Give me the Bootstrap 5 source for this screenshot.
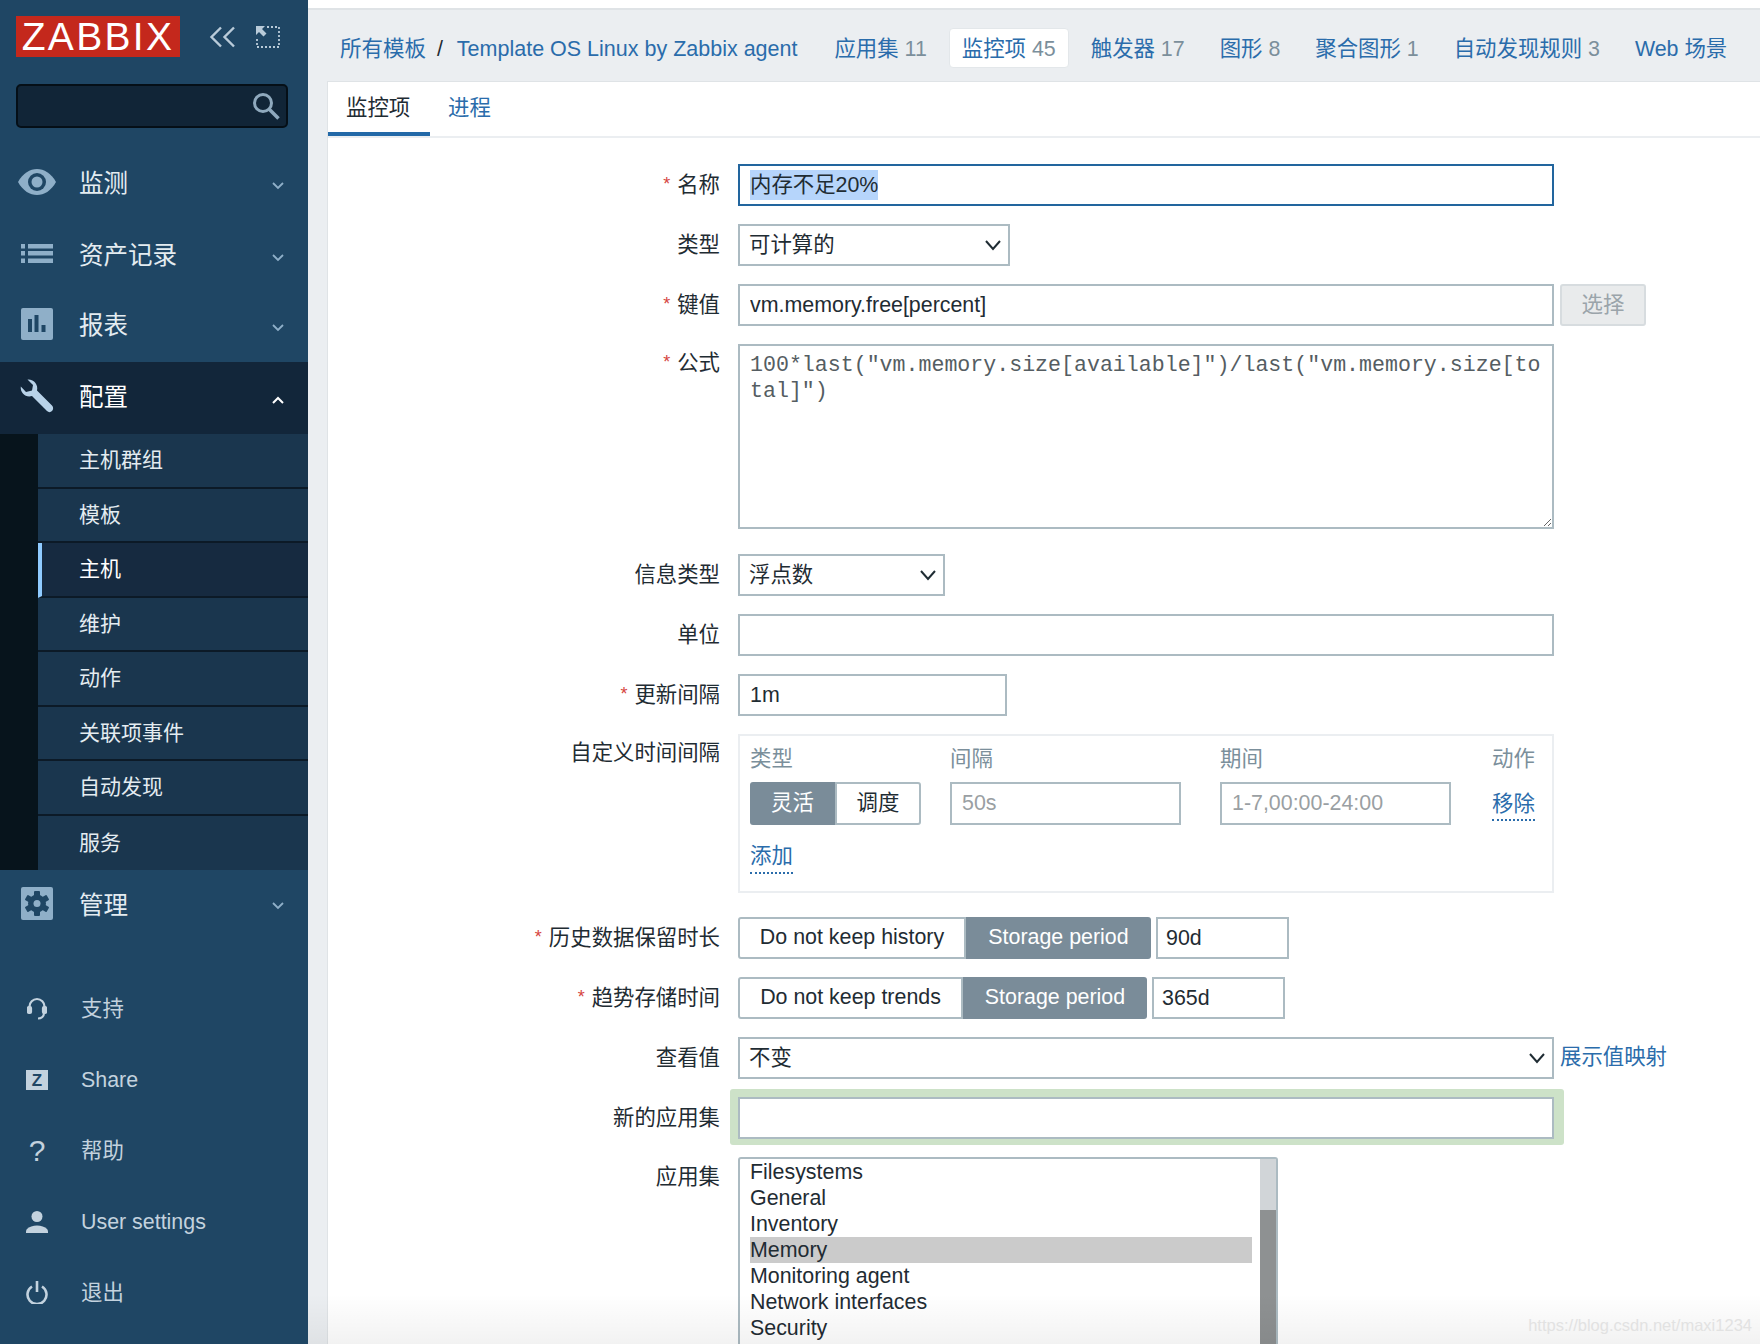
<!DOCTYPE html>
<html lang="zh">
<head>
<meta charset="utf-8">
<title>Zabbix 监控项</title>
<link href="https://cdn.jsdelivr.net/npm/bootstrap@5.3.0/dist/css/bootstrap.min.css" rel="stylesheet">
<style>
html,body{height:1344px;overflow:hidden}
body{font-family:"Liberation Sans","Noto Sans CJK SC",sans-serif;font-size:21.4px;color:#1f2c33;background:#fff;line-height:1.2}
a{text-decoration:none;color:#2a6cab}
.page{height:1344px;position:relative}
.zside{width:308px;flex:none;background:#1f4664;height:1344px;overflow:hidden}
.zlogo{width:164px;height:41px;background:#c4281c;color:#fff;font-size:39px;letter-spacing:2.3px;line-height:41px;text-align:center}
.ztop{padding:16px 0 0 16px;height:84px;gap:29px}
.ztools{height:41px;gap:20px}
.zsearch{margin:0 20px 20px 16px;height:44px;background:#112537;border:2px solid #050f17;border-radius:5px;padding-right:6px}
.zitem{height:72px;color:#e4ecf1;font-size:24.5px;padding-right:24px}
.zitem.zopen{background:#12263a;color:#fff}
.zitem.zshort{height:70px;padding-bottom:2px}
.zic{width:74px;flex:none;display:flex;justify-content:center;margin-bottom:5px}
.zlab{margin-left:5px}
.zarrow{margin-top:3px}
.zsub{padding-left:38px;background:#07141c}
.zsub a{display:flex;align-items:center;height:54.5px;padding:0 0 1px 41px;background:#1a364e;color:#e4ecf1;font-size:21px;border-bottom:2px solid #0c1a27}
.zsub a:last-child{border-bottom:0}
.zsub a.zcur{background:#162a40;border-left:4px solid #8fcbff;padding-left:37px;color:#fff}
.zbot{margin-top:32px}
.zbot .zitem{height:71px;color:#c3d2de;font-size:21.4px;padding:0}
.zbot .zic{margin-bottom:2px}
.zbot .zlab{margin-left:7px}
.zglyph{font-size:30px;line-height:1;color:#c3d2de}
.zmain{flex:1 1 auto;min-width:0;background:#ebeef1;border-top:2px solid #dfe3e6;margin-top:8px;height:1336px;overflow:hidden}
.zhead{height:71px;flex:none;padding:5px 0 0 19px;font-size:21.4px}
.zhead .zh{padding:8px 12px 4px;margin-right:9px;border:1px solid transparent;border-radius:4px;white-space:nowrap}
.zhead .zh.zon{background:#fff;border-color:#e3e7ea}
.zhead .zc{color:#7b8f9b}
.zhead .zcrumb{margin-right:0;padding-right:0;font-size:21.5px}
.zhead .zcrumb.zlast{padding-left:0;margin-right:23px}
.zsl{color:#1f2c33;margin:3px 7px 0 4px}
.zpanel{margin-left:19px;background:#fff;border-top:1px solid #dfe3e6;border-left:1px solid #dfe3e6;flex:1 1 auto;min-height:0;overflow:hidden}
.ztabs{height:56px;border-bottom:2px solid #ebeef1}
.ztabs a{height:54px;padding:3px 18px 0;display:flex;align-items:center;border-bottom:4px solid transparent}
.ztabs a.zon{color:#1f2c33;border-bottom-color:#2369a8;width:102px}
.zform{padding-top:26px}
.zrow{display:flex;margin-bottom:18px}
.zrow.zgap{margin-bottom:25px}
.zrow.zgap2{margin-bottom:24px}
.zlbl{width:392px;flex:none;text-align:right;margin-right:18px;height:42px;line-height:42px;white-space:nowrap}
.zlbl.ztall{height:auto;line-height:26px;padding-top:6px}
.zlbl.zt7{padding-top:7px}
.zstar{color:#d64541;font-size:18px;margin-right:7px;position:relative;top:-2px}
.zw{width:816px;flex:none}
.zctl.form-control,.zctl.form-select{height:42px;border:2px solid #acbbc2;border-radius:0;padding:0 10px;font-size:21.4px;color:#1f2c33;line-height:38px;box-shadow:none}
.zctl.form-select{padding-left:9px;padding-right:34px;background-size:18px 12px;background-position:right 6px center;background-image:url("data:image/svg+xml,%3csvg xmlns='http://www.w3.org/2000/svg' viewBox='0 0 18 12'%3e%3cpath fill='none' stroke='%231f2c33' stroke-width='2' d='M2 2l7 8 7-8'/%3e%3c/svg%3e")}
.zctl::placeholder{color:#9a9fa3}
.zfocus.form-control{border-color:#22659e;display:flex;align-items:center}
.zsel{background:#b6d5fb;line-height:30px;height:30px}
.zpick.btn{width:86px;height:42px;margin-left:6px;background:#e9ebec;border:2px solid #d7dcdf;border-radius:3px;color:#9aa4aa;font-size:21.4px;padding:0}
.zta.form-control{height:185px;font-family:"Liberation Mono",monospace;font-size:21.6px;line-height:25.5px;padding:7px 10px 6px;border:2px solid #acbbc2;border-radius:0;color:#555d62;resize:vertical;box-shadow:none}
.zbox{width:816px;height:159px;border:2px solid #ebeef1;padding:10px 10px 0;font-size:21.4px}
.zbox .zth{color:#7b8f9b;line-height:26px;height:26px;margin-bottom:10px;display:flex}
.zc1{width:200px;flex:none}.zc2{width:270px;flex:none}.zc3{width:272px;flex:none}
.zbtns{display:inline-flex;height:42px}
.zbtns.zsm{height:43px}
.zbtns .btn{border:2px solid #acbbc2;background:#fff;color:#1f2c33;font-size:21.4px;padding:0;line-height:1;border-radius:3px 0 0 3px}
.zbtns .btn.zon{border:0;background:#7a8c99;color:#fff;border-radius:0 3px 3px 0}
.zbtns .btn.zfirst{border-radius:3px 0 0 3px}
.zbtns .btn.zlastb{border-radius:0 3px 3px 0}
.zbox .zctl.form-control{width:231px;height:43px}
.zdot{border-bottom:2px dotted #2a6cab;padding-bottom:2px;display:inline-block}
.zdrop{margin-top:6px}
.zadd{margin-top:19px}
.znum.form-control{width:133px;margin-left:5px;padding-left:8px}
.zmapl{margin-left:6px}
.znew{background:#cde2c8;border-radius:3px;padding:8px 10px 6px 8px;margin:-8px -10px -6px -8px}
.zlist{width:540px;height:300px;border:2px solid #acbbc2;border-radius:3px 3px 0 0;display:flex;padding-left:10px;line-height:26px}
.zopts{width:502px;flex:none;margin-right:8px}
.zopts div{height:26px;white-space:nowrap}
.zopts .zpicked{background:#cbcbcb}
.zsb{width:16px;flex:none;background:#8e9192}
.zsbt{height:51px;background:#d1d5d8}
.zfade{position:absolute;left:308px;right:0;bottom:0;height:50px;background:linear-gradient(rgba(0,0,0,0),rgba(0,0,0,.05));pointer-events:none}
.zmark{position:absolute;right:8px;bottom:9px;font-size:16.5px;color:#e2e2e2;line-height:20px;white-space:nowrap}
</style>
</head>
<body>
<div class="page d-flex">
  <aside class="zside d-flex flex-column">
    <div class="ztop d-flex align-items-start">
      <div class="zlogo">ZABBIX</div>
      <div class="ztools d-flex align-items-center">
        <svg width="27" height="22" viewBox="0 0 27 22" fill="none" stroke="#b9cbd9" stroke-width="2.4"><path d="M12 1.500 2.500 11l9.500 9.500M25 1.500 15.500 11l9.500 9.500"/></svg>
        <svg width="24" height="22" viewBox="0 0 24 22" fill="none"><path d="M11 1h12v20H1V11" stroke="#b9cbd9" stroke-width="1.800" stroke-dasharray="2 2"/><path d="M0 0h9L6 3l4.500 4.500-3 3L3 6l-3 3z" fill="#b9cbd9"/></svg>
      </div>
    </div>
    <div class="zsearch d-flex align-items-center justify-content-end">
      <svg width="28" height="28" viewBox="0 0 28 28" fill="none" stroke="#8fa9bd"><circle cx="11" cy="11" r="8.500" stroke-width="3"/><path d="M17 17l9.500 9.500" stroke-width="3.500"/></svg>
    </div>
    <nav class="d-flex flex-column">
      <a class="zitem d-flex align-items-center" href="#"><span class="zic"><svg width="38" height="26" viewBox="0 0 38 26"><path d="M0 13C5 4 12 0 19 0s14 4 19 13c-5 9-12 13-19 13S5 22 0 13z" fill="#8fafc8"/><circle cx="19" cy="13" r="9" fill="#1f4664"/><circle cx="19" cy="13" r="5.500" fill="#8fafc8"/></svg></span><span class="zlab">监测</span><svg class="ms-auto zarrow" width="12" height="8" viewBox="0 0 12 8" fill="none" stroke="#8fafc8" stroke-width="1.800"><path d="M1 1l5 5 5-5"/></svg></a>
      <a class="zitem d-flex align-items-center" href="#"><span class="zic"><svg width="32" height="19" viewBox="0 0 32 19" fill="#8fafc8"><rect width="4" height="4.500"/><rect y="7" width="4" height="4.500"/><rect y="14.500" width="4" height="4.500"/><rect x="7" width="25" height="4.500"/><rect x="7" y="7" width="25" height="4.500"/><rect x="7" y="14.500" width="25" height="4.500"/></svg></span><span class="zlab">资产记录</span><svg class="ms-auto zarrow" width="12" height="8" viewBox="0 0 12 8" fill="none" stroke="#8fafc8" stroke-width="1.800"><path d="M1 1l5 5 5-5"/></svg></a>
      <a class="zitem zshort d-flex align-items-center" href="#"><span class="zic"><svg width="32" height="32" viewBox="0 0 32 32"><rect width="32" height="32" rx="2" fill="#8fafc8"/><path d="M7 11h4v13H7zM13.500 7h4v17h-4zM20.500 17h4v7h-4z" fill="#1f4664"/></svg></span><span class="zlab">报表</span><svg class="ms-auto zarrow" width="12" height="8" viewBox="0 0 12 8" fill="none" stroke="#8fafc8" stroke-width="1.800"><path d="M1 1l5 5 5-5"/></svg></a>
      <a class="zitem zopen d-flex align-items-center" href="#"><span class="zic"><svg width="34" height="34" viewBox="0 0 34 34"><path d="M32 26.500 17 11.500C18.500 6 14 0 7.500.5L13 6l-1 5.500L6 13 .8 7.500C0 14 6 19 12 17l15 15c1.500 1.500 3.500 1.500 5 0s1.500-4 0-5.500z" fill="#b8d2e8"/></svg></span><span class="zlab">配置</span><svg class="ms-auto zarrow" width="12" height="8" viewBox="0 0 12 8" fill="none" stroke="#fff" stroke-width="2"><path d="M1 7l5-5 5 5"/></svg></a>
      <div class="zsub d-flex flex-column">
        <a href="#">主机群组</a><a href="#">模板</a><a href="#" class="zcur">主机</a><a href="#">维护</a><a href="#">动作</a><a href="#">关联项事件</a><a href="#">自动发现</a><a href="#">服务</a>
      </div>
      <a class="zitem d-flex align-items-center" href="#"><span class="zic"><svg width="32" height="33" viewBox="0 0 32 33"><rect width="32" height="33" rx="2" fill="#8fafc8"/><g fill="#1f4664"><circle cx="16" cy="16.500" r="9"/><rect x="13" y="4" width="6" height="25" rx="1"/><rect x="13" y="4" width="6" height="25" rx="1" transform="rotate(60 16 16.500)"/><rect x="13" y="4" width="6" height="25" rx="1" transform="rotate(120 16 16.500)"/></g><circle cx="16" cy="16.500" r="3.500" fill="#8fafc8"/></svg></span><span class="zlab">管理</span><svg class="ms-auto" width="12" height="8" viewBox="0 0 12 8" fill="none" stroke="#8fafc8" stroke-width="1.800"><path d="M1 1l5 5 5-5"/></svg></a>
      <div class="zbot d-flex flex-column">
        <a class="zitem d-flex align-items-center" href="#"><span class="zic"><svg width="20" height="23" viewBox="0 0 20 23" fill="none" stroke="#c3d2de" stroke-width="2.200"><path d="M2.500 12V9.500a7.500 7.500 0 0 1 15 0V12"/><rect x="1" y="10" width="3" height="6" rx="1" fill="#c3d2de"/><rect x="16" y="10" width="3" height="6" rx="1" fill="#c3d2de"/><path d="M17 16c0 3.500-3 5.500-6 5.500"/></svg></span><span class="zlab">支持</span></a>
        <a class="zitem d-flex align-items-center" href="#"><span class="zic"><svg width="22" height="20" viewBox="0 0 22 20"><rect width="22" height="20" fill="#c3d2de"/><text x="11" y="16" text-anchor="middle" font-family="Liberation Sans" font-weight="700" font-size="17" fill="#1f4664">Z</text></svg></span><span class="zlab">Share</span></a>
        <a class="zitem d-flex align-items-center" href="#"><span class="zic zglyph">?</span><span class="zlab">帮助</span></a>
        <a class="zitem d-flex align-items-center" href="#"><span class="zic"><svg width="22" height="22" viewBox="0 0 22 22" fill="#c3d2de"><circle cx="11" cy="5.500" r="5.500"/><path d="M0 22c0-2 0-3 1-4 2-2 6-3.500 10-3.500s8 1.500 10 3.500c1 1 1 2 1 4z"/></svg></span><span class="zlab">User settings</span></a>
        <a class="zitem d-flex align-items-center" href="#"><span class="zic"><svg width="22" height="23" viewBox="0 0 22 23" fill="none" stroke="#c3d2de" stroke-width="2.600"><path d="M6 5.500a9.500 9.500 0 1 0 10 0M11 0v11"/></svg></span><span class="zlab">退出</span></a>
      </div>
    </nav>
  </aside>
  <main class="zmain d-flex flex-column">
    <div class="zhead d-flex align-items-center">
      <a class="zh zcrumb" href="#">所有模板</a><span class="zsl">&nbsp;/&nbsp;</span>
      <a class="zh zcrumb zlast" href="#">Template OS Linux by Zabbix agent</a>
      <a class="zh" href="#">应用集 <span class="zc">11</span></a>
      <a class="zh zon" href="#">监控项 <span class="zc">45</span></a>
      <a class="zh" href="#">触发器 <span class="zc">17</span></a>
      <a class="zh" href="#">图形 <span class="zc">8</span></a>
      <a class="zh" href="#">聚合图形 <span class="zc">1</span></a>
      <a class="zh" href="#">自动发现规则 <span class="zc">3</span></a>
      <a class="zh" href="#">Web 场景</a>
    </div>
    <div class="zpanel">
      <div class="ztabs d-flex">
        <a class="zon" href="#">监控项</a><a href="#">进程</a>
      </div>
      <form class="zform">
        <div class="zrow"><div class="zlbl"><span class="zstar">*</span>名称</div><div class="zw"><div class="form-control zctl zfocus"><span class="zsel">内存不足20%</span></div></div></div>
        <div class="zrow"><div class="zlbl">类型</div><select class="form-select zctl" style="width:272px"><option>可计算的</option></select></div>
        <div class="zrow"><div class="zlbl"><span class="zstar">*</span>键值</div><div class="zw"><input class="form-control zctl" value="vm.memory.free[percent]"></div><button type="button" class="btn zpick">选择</button></div>
        <div class="zrow zgap"><div class="zlbl ztall"><span class="zstar">*</span>公式</div><div class="zw"><textarea class="form-control zta">100*last("vm.memory.size[available]")/last("vm.memory.size[total]")</textarea></div></div>
        <div class="zrow"><div class="zlbl">信息类型</div><select class="form-select zctl" style="width:207px"><option>浮点数</option></select></div>
        <div class="zrow"><div class="zlbl">单位</div><div class="zw"><input class="form-control zctl"></div></div>
        <div class="zrow"><div class="zlbl"><span class="zstar">*</span>更新间隔</div><input class="form-control zctl" style="width:269px" value="1m"></div>
        <div class="zrow zgap2"><div class="zlbl ztall">自定义时间间隔</div>
          <div class="zbox">
            <div class="zth"><span class="zc1">类型</span><span class="zc2">间隔</span><span class="zc3">期间</span><span>动作</span></div>
            <div class="d-flex align-items-center">
              <div class="zc1"><div class="zbtns zsm"><button type="button" class="btn zon zfirst" style="width:85px">灵活</button><button type="button" class="btn zlastb" style="width:86px">调度</button></div></div>
              <div class="zc2"><input class="form-control zctl" placeholder="50s"></div>
              <div class="zc3"><input class="form-control zctl" placeholder="1-7,00:00-24:00"></div>
              <a class="zdot zdrop" href="#">移除</a>
            </div>
            <div class="zadd"><a class="zdot" href="#">添加</a></div>
          </div>
        </div>
        <div class="zrow"><div class="zlbl"><span class="zstar">*</span>历史数据保留时长</div><div class="zbtns"><button type="button" class="btn" style="width:228px">Do not keep history</button><button type="button" class="btn zon" style="width:185px">Storage period</button></div><input class="form-control zctl znum" value="90d"></div>
        <div class="zrow"><div class="zlbl"><span class="zstar">*</span>趋势存储时间</div><div class="zbtns"><button type="button" class="btn" style="width:225px">Do not keep trends</button><button type="button" class="btn zon" style="width:184px">Storage period</button></div><input class="form-control zctl znum" value="365d"></div>
        <div class="zrow"><div class="zlbl">查看值</div><select class="form-select zctl zw"><option>不变</option></select><a class="zmapl align-self-center" href="#">展示值映射</a></div>
        <div class="zrow"><div class="zlbl">新的应用集</div><div class="zw"><div class="znew"><input class="form-control zctl"></div></div></div>
        <div class="zrow"><div class="zlbl ztall zt7">应用集</div>
          <div class="zlist">
            <div class="zopts"><div>Filesystems</div><div>General</div><div>Inventory</div><div class="zpicked">Memory</div><div>Monitoring agent</div><div>Network interfaces</div><div>Security</div></div>
            <div class="zsb"><div class="zsbt"></div></div>
          </div>
        </div>
      </form>
    </div>
  </main>
  <div class="zfade"><span class="zmark">https://blog.csdn.net/maxi1234</span></div>
</div>
<script src="https://cdn.jsdelivr.net/npm/bootstrap@5.3.0/dist/js/bootstrap.bundle.min.js"></script>
</body>
</html>
